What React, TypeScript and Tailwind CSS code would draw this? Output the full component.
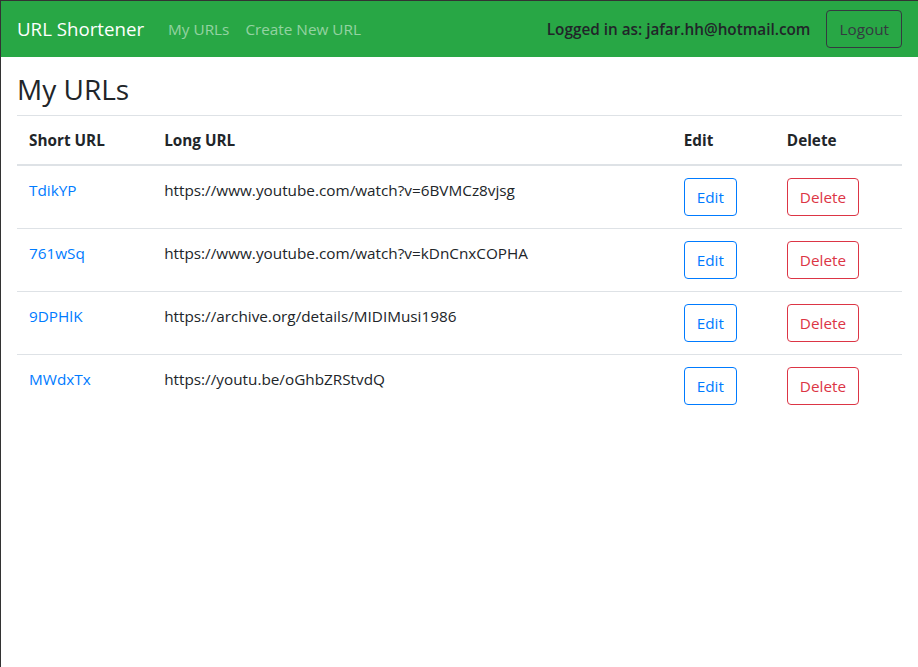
import React from "react";

const urls = [
  { short: "TdikYP", long: "https://www.youtube.com/watch?v=6BVMCz8vjsg" },
  { short: "761wSq", long: "https://www.youtube.com/watch?v=kDnCnxCOPHA" },
  { short: "9DPHlK", long: "https://archive.org/details/MIDIMusi1986" },
  { short: "MWdxTx", long: "https://youtu.be/oGhbZRStvdQ" },
];

const Navbar = () => {
  return (
    <nav className="flex items-center justify-between h-[56px] px-4 bg-[#28a745]">
      <div className="flex items-center">
        <a className="text-[18.7px] leading-[30px] py-[5px] mr-4 text-white">URL Shortener</a>
        <a className="px-2 py-2 text-[rgba(255,255,255,0.5)]">My URLs</a>
        <a className="px-2 py-2 text-[rgba(255,255,255,0.5)]">Create New URL</a>
      </div>
      <div className="flex items-center">
        <span className="font-semibold text-[#212529] mr-4">
          Logged in as: jafar.hh@hotmail.com
        </span>
        <button className="h-[38px] px-3 border border-[#343a40] rounded text-[#343a40]">
          Logout
        </button>
      </div>
    </nav>
  );
};

const App = () => {
  return (
    <div
      className="min-h-screen bg-white border-l border-t border-[#333] text-[#212529] text-[15.3px] leading-6"
      style={{ fontFamily: '"Segoe UI", "Open Sans", sans-serif' }}
    >
      <Navbar />
      <div className="px-4 pt-4">
        <h3 className="text-[28px] leading-[33.6px] font-medium mb-2">My URLs</h3>
        <table className="w-full border-collapse text-left">
          <thead>
            <tr>
              <th className="w-[135px] p-3 font-bold align-bottom border-t border-b-2 border-[#dee2e6]">Short URL</th>
              <th className="w-[519px] p-3 font-bold align-bottom border-t border-b-2 border-[#dee2e6]">Long URL</th>
              <th className="w-[103px] p-3 font-bold align-bottom border-t border-b-2 border-[#dee2e6]">Edit</th>
              <th className="w-[127px] p-3 font-bold align-bottom border-t border-b-2 border-[#dee2e6]">Delete</th>
            </tr>
          </thead>
          <tbody>
            {urls.map((u, idx) => (
              <tr key={idx}>
                <td className="p-3 align-top border-t border-[#dee2e6]">
                  <a className="text-[#007bff]">{u.short}</a>
                </td>
                <td className="p-3 align-top border-t border-[#dee2e6]">{u.long}</td>
                <td className="p-3 align-top border-t border-[#dee2e6]">
                  <button className="h-[38px] px-3 border border-[#007bff] rounded text-[#007bff]">Edit</button>
                </td>
                <td className="p-3 align-top border-t border-[#dee2e6]">
                  <button className="h-[38px] px-3 border border-[#dc3545] rounded text-[#dc3545]">Delete</button>
                </td>
              </tr>
            ))}
          </tbody>
        </table>
      </div>
    </div>
  );
};

export default App;
